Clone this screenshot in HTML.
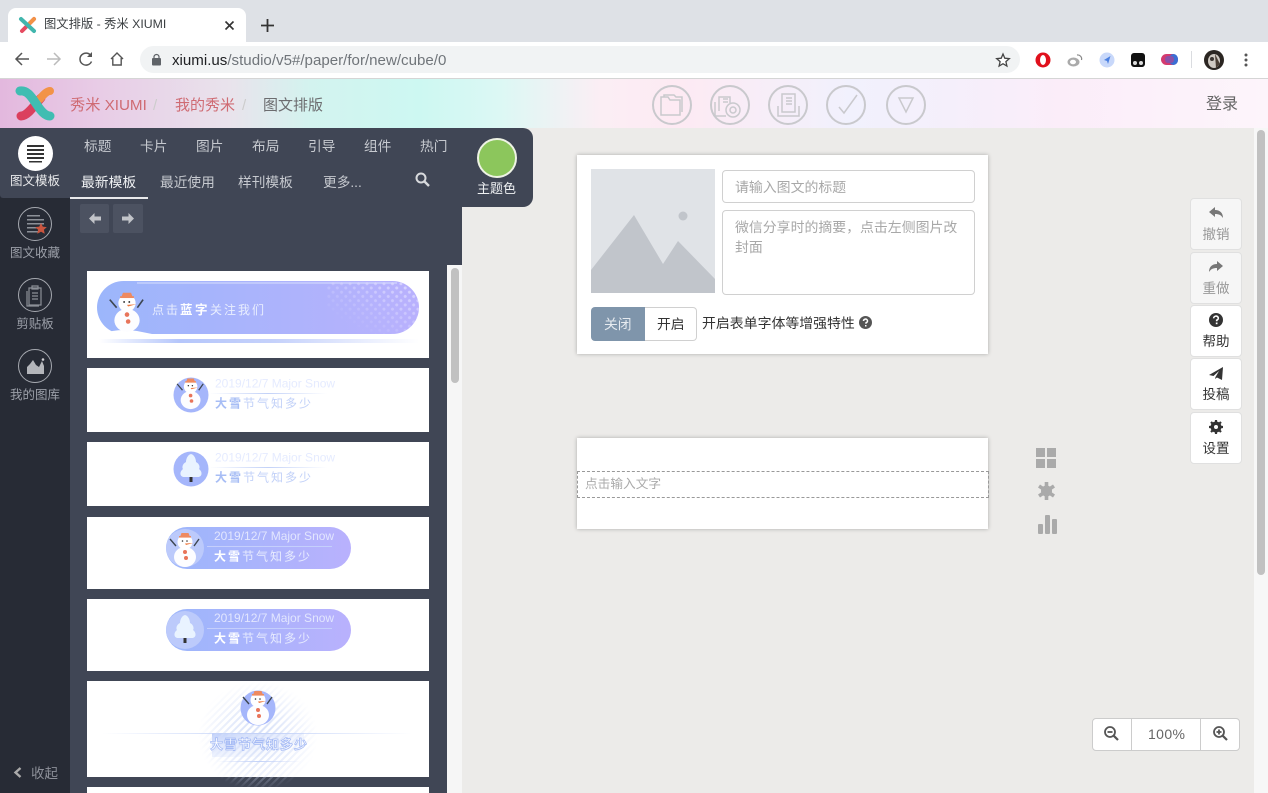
<!DOCTYPE html>
<html lang="zh"><head><meta charset="utf-8"><title>图文排版 - 秀米 XIUMI</title>
<style>
html,body{margin:0;padding:0;width:1268px;height:793px;overflow:hidden;background:#ecebe9}
body{position:relative;font-family:"Liberation Sans","Noto Sans CJK SC",sans-serif;font-size:14px;color:#333}
.a,.t{position:absolute}
.t{white-space:nowrap;line-height:1}
svg{position:absolute;overflow:visible}
.nav{color:#c6c9cf;font-size:13.700px}
.side{color:#9b9fa8;font-size:12.500px;width:70px;left:0;text-align:center}
.ring{position:absolute;left:18px;width:32px;height:32px;border:1.500px solid #a6a9b0;border-radius:50%}
.card{position:absolute;left:87px;width:342px;background:#fff}
.sb{position:absolute;left:1190px;width:52px;height:52px;background:#fff;border:1px solid #e0e0e0;box-sizing:border-box;border-radius:4px;text-align:center;font-size:13.500px;color:#333}
.sb span{position:absolute;left:0;right:0;top:29px;line-height:1}
.sb.off{background:#f6f6f6;color:#999}
.sb svg{left:18px;top:7px}
.hc{position:absolute;top:85px;width:36px;height:36px;border:2px solid #c9c9cd;border-radius:50%;box-sizing:content-box}
</style></head><body>
<svg width="0" height="0" style="position:absolute"><defs>
<g id="snow">
<path d="M-9-2-15-9M9-2 14-9" stroke="#3d4650" stroke-width="1.400"/>
<ellipse cx="0" cy="9" rx="11" ry="10" fill="#fdfdff"/>
<circle cx="0" cy="-6" r="7.500" fill="#fff"/>
<path d="M-5-11h10l-1.500-4h-7z" fill="#ee8a60"/><rect x="-6" y="-12" width="12" height="1.600" fill="#ee8a60"/>
<circle cx="-2.500" cy="-7" r=".8" fill="#333"/><circle cx="2" cy="-7" r=".8" fill="#333"/>
<path d="M0-4.500 8-5 1-3z" fill="#ee7a40"/>
<circle cx="0" cy="4" r="2" fill="#e8745a"/><circle cx="1" cy="10" r="2" fill="#e8745a"/>
</g>
<g id="tree">
<path d="M0-15C4-14 5-9 5-7 9-5 9-1 8 0 12 3 11 8 7 8H-7C-11 8-12 3-8 0-9-1-9-5-5-7-5-9-4-14 0-15Z" fill="#e9f3ff"/>
<rect x="-1.500" y="8" width="3" height="5" fill="#333"/>
</g>
<linearGradient id="bl" x1="0" x2="1" y1="0" y2="0"><stop offset="0" stop-color="#9cb6fb"/><stop offset="1" stop-color="#b9b1fd"/></linearGradient>
<linearGradient id="ln" x1="0" x2="1" y1="0" y2="0"><stop offset="0" stop-color="#c3d2f8" stop-opacity="0"/><stop offset=".5" stop-color="#c3d2f8"/><stop offset="1" stop-color="#c3d2f8" stop-opacity="0"/></linearGradient>
<linearGradient id="strip" x1="0" x2="1" y1="0" y2="0"><stop offset="0" stop-color="#fff"/><stop offset=".25" stop-color="#b5c6fb"/><stop offset=".55" stop-color="#c5d1fb"/><stop offset="1" stop-color="#fff"/></linearGradient>
<linearGradient id="bandg" x1="0" x2="1" y1="0" y2="1"><stop offset="0" stop-color="#bccdfa"/><stop offset="1" stop-color="#fff" stop-opacity="0"/></linearGradient>
<pattern id="hatch" width="5" height="5" patternUnits="userSpaceOnUse" patternTransform="rotate(45)"><rect width="2" height="5" fill="#d5dff8"/></pattern>
<pattern id="dots" width="6" height="6" patternUnits="userSpaceOnUse" patternTransform="rotate(45)"><circle cx="3" cy="3" r="1.500" fill="#dcd9ff"/></pattern>
<radialGradient id="fade"><stop offset="0" stop-color="#fff"/><stop offset=".5" stop-color="#999"/><stop offset="1" stop-color="#000"/></radialGradient>
<linearGradient id="dfade" x1="0" x2="1" y1="1" y2="0"><stop offset=".2" stop-color="#000"/><stop offset="1" stop-color="#fff"/></linearGradient>
<mask id="hm" maskUnits="userSpaceOnUse" x="-60" y="-45" width="120" height="110"><rect x="-60" y="-45" width="120" height="110" fill="url(#fade)"/></mask>
<mask id="dm" maskUnits="userSpaceOnUse" x="240" y="10" width="92" height="53"><rect x="240" y="10" width="92" height="53" fill="url(#dfade)"/></mask>
<clipPath id="pill1"><rect x="10" y="10" width="322" height="53" rx="26.500"/></clipPath>
</defs></svg>

<!-- browser chrome -->
<div class="a" style="left:0;top:0;width:1268px;height:42px;background:#dee1e6"></div>
<div class="a" style="left:8px;top:8px;width:238px;height:34px;background:#fff;border-radius:8px 8px 0 0"></div>
<svg style="left:19px;top:17px" width="18" height="16" viewBox="0 0 18 16"><path d="M15 2 3 14" stroke="#e64b60" stroke-width="4" stroke-linecap="round"/><path d="M15 2 11 6" stroke="#f29347" stroke-width="4" stroke-linecap="round"/><path d="M2 2 15 14" stroke="#41b6ad" stroke-width="4" stroke-linecap="round"/></svg>
<div class="t" style="left:44px;top:18px;font-size:12.300px;color:#3c4043;">图文排版 - 秀米 XIUMI</div>
<svg style="left:224px;top:20px" width="11" height="11"><path d="M1.500 1.500 9.500 9.500M9.500 1.500 1.500 9.500" stroke="#333" stroke-width="1.600"/></svg>
<svg style="left:261px;top:19px" width="13" height="13"><path d="M6.500 0V13M0 6.500H13" stroke="#333" stroke-width="1.800"/></svg>
<div class="a" style="left:0;top:42px;width:1268px;height:36px;background:#fff"></div>
<svg style="left:15px;top:52px" width="14" height="14" fill="none" stroke="#555" stroke-width="1.500"><path d="M14 7H1.500M7 1 1 7l6 6"/></svg>
<svg style="left:47px;top:52px" width="14" height="14" fill="none" stroke="#bbb" stroke-width="1.500"><path d="M0 7H12.500M7 1l6 6-6 6"/></svg>
<svg style="left:79px;top:52px" width="14" height="14" fill="none" stroke="#555" stroke-width="1.500"><path d="M12.500 9.500A6 6 0 1 1 12 3.800"/><path d="M13 0V5H8" fill="#555" stroke="none"/></svg>
<svg style="left:110px;top:52px" width="14" height="14" fill="none" stroke="#555" stroke-width="1.400"><path d="M1 7 7 1l6 6M2.800 6V13H11.200V6"/></svg>
<div class="a" style="left:140px;top:46px;width:880px;height:27px;background:#f1f3f4;border-radius:14px"></div>
<svg style="left:152px;top:54px" width="9" height="12"><rect y="4" width="9" height="7.500" rx="1" fill="#5f6368"/><path d="M2 4.500V3a2.500 2.500 0 0 1 5 0V4.500" fill="none" stroke="#5f6368" stroke-width="1.200"/></svg>
<div class="t" style="left:172px;top:53px;font-size:15.100px;color:#202124;">xiumi.us<span style="color:#70757a">/studio/v5#/paper/for/new/cube/0</span></div>
<svg style="left:996px;top:53px" width="14" height="14" fill="#fff" stroke="#444" stroke-width="1.300"><path d="M7 1 8.800 5.200 13.300 5.600 9.900 8.600 10.900 13 7 10.700 3.100 13 4.100 8.600.7 5.600 5.200 5.200Z"/></svg>
<svg style="left:1035px;top:52px" width="16" height="16"><circle cx="8" cy="8" r="7.500" fill="#e0101c"/><ellipse cx="8" cy="8" rx="3" ry="5" fill="#fff"/></svg>
<svg style="left:1067px;top:53px" width="16" height="14"><ellipse cx="6.500" cy="9" rx="6" ry="4.500" fill="#aaa"/><ellipse cx="6" cy="9" rx="3" ry="2.300" fill="#fff"/><path d="M10 2A4 4 0 0 1 14.500 7" fill="none" stroke="#888" stroke-width="1.200"/></svg>
<svg style="left:1099px;top:52px" width="16" height="16"><circle cx="8" cy="8" r="7.500" fill="#c8d8fa"/><path d="M11.500 4 5 8l3 1 1 3z" fill="#4a7fe0"/></svg>
<svg style="left:1130px;top:52px" width="16" height="16"><rect x="1" y="1" width="14" height="14" rx="3" fill="#111"/><circle cx="5" cy="11" r="2" fill="#ddd"/><circle cx="11" cy="11" r="2" fill="#ddd"/></svg>
<svg style="left:1161px;top:54px" width="17" height="11"><rect width="17" height="11" rx="5.500" fill="#d43a6f"/><rect x="8" width="9" height="11" rx="5" fill="#3a6fd4"/><rect x="4" y="2" width="9" height="7" rx="3" fill="#8a50a8"/></svg>
<div class="a" style="left:1191px;top:51px;width:1px;height:17px;background:#dadce0"></div>
<svg style="left:1204px;top:50px" width="20" height="20"><circle cx="10" cy="10" r="10" fill="#2b2622"/><ellipse cx="10" cy="11" rx="6" ry="7" fill="#cfc9c2"/><circle cx="8" cy="9" r="2" fill="#3a3430"/><path d="M11 4 16 14 12 18Z" fill="#4a3e34"/></svg>
<svg style="left:1244px;top:53px" width="4" height="14" fill="#555"><circle cx="2" cy="2" r="1.500"/><circle cx="2" cy="7" r="1.500"/><circle cx="2" cy="12" r="1.500"/></svg>
<div class="a" style="left:0;top:78px;width:1268px;height:1px;background:#d5d5d5"></div>

<!-- app header -->
<div class="a" style="left:0;top:79px;width:1268px;height:49px;background:linear-gradient(90deg,#e3b8de 0,#e8cce6 100px,#e9e3ec 230px,#d3f3ef 310px,#cdf8f2 420px,#dcf8f4 500px,#fbeef4 600px,#fdeaf3 680px,#f1f1fd 850px,#f5effb 950px,#fbedf9 1060px,#fdf5fb 1268px)"></div>
<svg style="left:14px;top:85px" width="42" height="38" viewBox="0 0 42 38"><path d="M7 31C14 31 22 18 27 13" fill="none" stroke="#db3f5e" stroke-width="9" stroke-linecap="round"/><path d="M26 14C29 10 33 6 36 6" fill="none" stroke="#f29347" stroke-width="8" stroke-linecap="round"/><path d="M6 6C14 5 18 13 23 20 27 26 31 31 36 31" fill="none" stroke="#40bdb2" stroke-width="9" stroke-linecap="round"/></svg>
<div class="t" style="left:70px;top:98px;font-size:15.200px;color:#cf6b73;">秀米 XIUMI</div>
<div class="t" style="left:153px;top:98px;font-size:15px;color:#ccc;">/</div>
<div class="t" style="left:175px;top:98px;font-size:15px;color:#cf6b73;">我的秀米</div>
<div class="t" style="left:242px;top:98px;font-size:15px;color:#ccc;">/</div>
<div class="t" style="left:263px;top:98px;font-size:15px;color:#6c6c6f;">图文排版</div>
<div class="hc" style="left:652px"></div>
<div class="hc" style="left:710px"></div>
<div class="hc" style="left:768px"></div>
<div class="hc" style="left:826px"></div>
<div class="hc" style="left:886px"></div>
<svg style="left:652px;top:85px" width="280" height="40" fill="none" stroke="#c9c9cd" stroke-width="1.500">
<path d="M9 15V30H28V15H18L16 12H9ZM12 12V10H22L24 12H30V27"/>
<path d="M67 26V12H78V18M63 17V31H74M71 14H76M71 17H76"/><circle cx="81" cy="25" r="7"/><circle cx="81" cy="25" r="3"/>
<path d="M130 15V27H143V9H130V15M134 13H140M134 16H140M134 19H140M126 21V31H147V21"/>
<path d="M187 22 192 28 205 10"/>
<path d="M247 13H261L254 27Z"/>
</svg>
<div class="t" style="left:1206px;top:97px;font-size:16px;color:#666;">登录</div>

<!-- left sidebar -->
<div class="a" style="left:0;top:128px;width:70px;height:665px;background:#272b35"></div>
<div class="a" style="left:70px;top:128px;width:392px;height:665px;background:#404655"></div>
<div class="a" style="left:70px;top:128px;width:463px;height:79px;background:#404655;border-radius:0 10px 10px 0"></div>
<div class="a" style="left:0;top:128px;width:70px;height:70px;background:#404655;border-radius:0 0 0 3px"></div>
<div class="a" style="left:18px;top:136px;width:35px;height:35px;background:#fff;border-radius:50%"></div>
<svg style="left:27px;top:145px" width="18" height="18" fill="#333"><rect width="17" height="2" y="0"/><rect width="17" height="2" y="4"/><rect width="17" height="2" y="8"/><rect width="17" height="2" y="12"/><rect x="2" width="13" height="1.500" y="16"/></svg>
<div class="t side" style="top:175px;color:#e8e9eb;">图文模板</div>

<div class="ring" style="top:207px"></div>
<svg style="left:27px;top:215px" width="28" height="24"><g fill="#8c9098"><rect width="13" height="1.500" y="0"/><rect width="17" height="1.500" y="4"/><rect width="17" height="1.500" y="8"/><rect width="17" height="1.500" y="12"/><rect width="13" height="1.500" y="16"/></g><path d="M14 8l1.800 3.600 4 .5-2.900 2.700.8 4-3.700-2-3.700 2 .8-4-2.900-2.700 4-.5z" fill="#c9553f"/></svg>
<div class="t side" style="top:247px;">图文收藏</div>
<div class="ring" style="top:278px"></div>
<svg style="left:26px;top:285px" width="19" height="22" fill="none" stroke="#8c9098" stroke-width="1.200"><path d="M3 3H15V20H3ZM1 6V21H13M6 1H12V4H6ZM6 8H12M6 11H12M6 14H12"/></svg>
<div class="t side" style="top:318px;">剪贴板</div>
<div class="ring" style="top:349px"></div>
<svg style="left:26px;top:358px" width="20" height="18" fill="#b4b6bb"><path d="M1 16V9L4 6 7 2 10 7 13 9 16 3 18 8V16Z"/><circle cx="17" cy="1.500" r="1.300" fill="#d0d0d4"/></svg>
<div class="t side" style="top:389px;">我的图库</div>
<svg style="left:13px;top:767px" width="10" height="11"><path d="M7.500 1 2.500 5.500 7.500 10" fill="none" stroke="#aaa" stroke-width="2.400"/></svg>
<div class="t" style="left:31px;top:767px;font-size:13.500px;color:#8d9099;">收起</div>

<!-- category nav -->
<div class="t nav" style="left:84px;top:140px;">标题</div>
<div class="t nav" style="left:140px;top:140px;">卡片</div>
<div class="t nav" style="left:196px;top:140px;">图片</div>
<div class="t nav" style="left:252px;top:140px;">布局</div>
<div class="t nav" style="left:308px;top:140px;">引导</div>
<div class="t nav" style="left:364px;top:140px;">组件</div>
<div class="t nav" style="left:420px;top:140px;">热门</div>
<div class="t" style="left:81px;top:176px;font-size:13.800px;color:#eef0f2;">最新模板</div>
<div class="t nav" style="left:160px;top:176px;">最近使用</div>
<div class="t nav" style="left:238px;top:176px;">样刊模板</div>
<div class="t nav" style="left:323px;top:176px;">更多...</div>
<div class="a" style="left:70px;top:197px;width:78px;height:2px;background:#e8e9eb"></div>
<svg style="left:415px;top:172px" width="15" height="15" fill="none" stroke="#d8dadd" stroke-width="2"><circle cx="6" cy="6" r="4.500"/><path d="M9.500 9.500 14 14" stroke-width="2.400"/></svg>
<div class="a" style="left:477px;top:138px;width:36px;height:36px;background:#8cc65c;border:2px solid #eef3e4;border-radius:50%;box-sizing:content-box"></div>
<div class="t" style="left:477px;top:182px;font-size:13px;color:#eef0f2;">主题色</div>
<div class="a" style="left:80px;top:204px;width:29px;height:29px;background:#4c5261;border-radius:2px"></div>
<div class="a" style="left:113px;top:204px;width:30px;height:29px;background:#4c5261;border-radius:2px"></div>
<svg style="left:89px;top:213px" width="12" height="11" fill="#c2c4c9"><path d="M0 5.500 5.500 0V3.500H12V7.500H5.500V11Z"/></svg>
<svg style="left:122px;top:213px" width="12" height="11" fill="#c2c4c9"><path d="M12 5.500 6.500 0V3.500H0V7.500H6.500V11Z"/></svg>

<!-- panel scrollbar -->
<div class="a" style="left:447px;top:265px;width:15px;height:528px;background:#f6f6f6"></div>
<div class="a" style="left:451px;top:268px;width:8px;height:115px;background:#c1c1c1;border-radius:4px"></div>

<!-- cards -->
<div class="card" style="top:271px;height:87px"></div>
<svg style="left:87px;top:271px" width="342" height="87">
<rect x="10" y="10" width="322" height="53" rx="26.500" fill="url(#bl)"/>
<rect x="50" y="11.500" width="260" height="1" fill="#d7defd"/>
<g clip-path="url(#pill1)"><rect x="240" y="10" width="92" height="53" fill="url(#dots)" mask="url(#dm)"/></g>
<path d="M15 63Q30 57 50 60L65 63Z" fill="#fff"/>
<rect x="12" y="68" width="320" height="4" fill="url(#strip)"/>
<g transform="translate(40 39) scale(1.150)"><use href="#snow"/></g>
<text x="65" y="43" font-size="12" letter-spacing="2" fill="#e9eefe">点击<tspan font-weight="700" fill="#fff" font-size="12.500" letter-spacing="2.500">蓝字</tspan>关注我们</text>
</svg>

<div class="card" style="top:368px;height:64px"></div>
<svg style="left:87px;top:368px" width="342" height="64">
<circle cx="104" cy="27" r="17.500" fill="#a5b6fb"/><use href="#snow" x="104" y="24" transform="translate(10 2.400) scale(.9)" />
<text x="128" y="19.500" font-size="12" fill="#e5ebff">2019/12/7 Major Snow</text>
<rect x="122" y="25" width="118" height="1" fill="url(#ln)"/>
<text x="128" y="39.500" font-size="12" letter-spacing="2" fill="#c2d1f8"><tspan font-weight="700" fill="#a7bdf5">大雪</tspan>节气知多少</text>
</svg>

<div class="card" style="top:442px;height:64px"></div>
<svg style="left:87px;top:442px" width="342" height="64">
<circle cx="104" cy="27" r="17.500" fill="#a5b6fb"/><use href="#tree" x="104" y="27"/>
<text x="128" y="19.500" font-size="12" fill="#e5ebff">2019/12/7 Major Snow</text>
<rect x="122" y="25" width="118" height="1" fill="url(#ln)"/>
<text x="128" y="39.500" font-size="12" letter-spacing="2" fill="#c2d1f8"><tspan font-weight="700" fill="#a7bdf5">大雪</tspan>节气知多少</text>
</svg>

<div class="card" style="top:517px;height:72px"></div>
<svg style="left:87px;top:517px" width="342" height="72">
<rect x="79" y="10" width="185" height="42" rx="21" fill="url(#bl)"/>
<circle cx="98" cy="31" r="19" fill="#bccafb"/><use href="#snow" x="98" y="31"/>
<text x="127" y="23" font-size="12" fill="#e2e6fe">2019/12/7 Major Snow</text>
<rect x="120" y="29" width="125" height="1" fill="#c5cffc"/>
<text x="127" y="43.500" font-size="12" letter-spacing="2" fill="#e7ebfe"><tspan font-weight="700" fill="#fff">大雪</tspan>节气知多少</text>
</svg>

<div class="card" style="top:599px;height:72px"></div>
<svg style="left:87px;top:599px" width="342" height="72">
<rect x="79" y="10" width="185" height="42" rx="21" fill="url(#bl)"/>
<circle cx="98" cy="31" r="19" fill="#bccafb"/><use href="#tree" x="98" y="31"/>
<text x="127" y="23" font-size="12" fill="#e2e6fe">2019/12/7 Major Snow</text>
<rect x="120" y="29" width="125" height="1" fill="#c5cffc"/>
<text x="127" y="43.500" font-size="12" letter-spacing="2" fill="#e7ebfe"><tspan font-weight="700" fill="#fff">大雪</tspan>节气知多少</text>
</svg>

<div class="card" style="top:681px;height:96px"></div>
<svg style="left:87px;top:681px" width="342" height="96">
<rect x="125" y="52" width="92" height="24" fill="url(#bandg)"/>
<g transform="translate(171 45)"><rect x="-60" y="-45" width="120" height="110" fill="url(#hatch)" mask="url(#hm)"/></g>
<circle cx="171" cy="27" r="17.500" fill="#a5b6fb"/><use href="#snow" x="171" y="25"/>
<rect x="15" y="52" width="310" height="1" fill="url(#ln)"/>
<rect x="130" y="80" width="84" height="1" fill="url(#ln)"/>
<text x="123" y="68" font-size="13" font-weight="700" letter-spacing="1" fill="#fff" stroke="#a6bbf5" stroke-width=".8">大雪节气知多少</text>
</svg>

<div class="card" style="top:787px;height:6px"></div>

<!-- editor cards -->
<div class="a" style="left:577px;top:155px;width:411px;height:199px;background:#fff;box-shadow:0 0 4px rgba(0,0,0,.28)"></div>
<svg style="left:591px;top:169px" width="124" height="124"><rect width="124" height="124" fill="#e0e3e7"/><path d="M0 101 43 46 72 95 87 72 124 110V124H0Z" fill="#c1c5cb"/><circle cx="92" cy="47" r="4.500" fill="#c1c5cb"/></svg>
<div class="a" style="left:722px;top:170px;width:253px;height:33px;background:#fff;border:1px solid #d0d0d0;border-radius:4px;box-sizing:border-box"></div>
<div class="t" style="left:735px;top:181px;font-size:13.900px;color:#a8a8a8;">请输入图文的标题</div>
<div class="a" style="left:722px;top:210px;width:253px;height:85px;background:#fff;border:1px solid #d0d0d0;border-radius:4px;box-sizing:border-box"></div>
<div class="t" style="left:735px;top:221px;font-size:13.900px;color:#a8a8a8;">微信分享时的摘要，点击左侧图片改</div>
<div class="t" style="left:735px;top:241px;font-size:13.900px;color:#a8a8a8;">封面</div>
<div class="a" style="left:591px;top:307px;width:54px;height:34px;background:#7f95ab;border-radius:4px 0 0 4px"></div>
<div class="a" style="left:645px;top:307px;width:52px;height:34px;background:#fff;border:1px solid #d0d0d0;border-left:0;border-radius:0 4px 4px 0;box-sizing:border-box"></div>
<div class="t" style="left:604px;top:318px;font-size:13.800px;color:#e6ebf0;">关闭</div>
<div class="t" style="left:657px;top:318px;font-size:13.800px;color:#333;">开启</div>
<div class="t" style="left:702px;top:317px;font-size:13.900px;color:#333;">开启表单字体等增强特性</div>
<svg style="left:859px;top:316px" width="13" height="13"><circle cx="6.500" cy="6.500" r="6.500" fill="#555"/><path d="M4.500 5A2 1.900 0 1 1 7 6.800V7.800" fill="none" stroke="#fff" stroke-width="1.500"/><rect x="6" y="9" width="1.500" height="1.500" fill="#fff"/></svg>

<div class="a" style="left:577px;top:438px;width:411px;height:91px;background:#fff;box-shadow:0 0 4px rgba(0,0,0,.28)"></div>
<div class="a" style="left:577px;top:471px;width:412px;height:27px;border:1px dashed #999;box-sizing:border-box"></div>
<div class="t" style="left:585px;top:478px;font-size:12.700px;color:#aaa;">点击输入文字</div>

<!-- floating icons -->
<svg style="left:1036px;top:448px" width="24" height="90" fill="#aaa">
<rect width="9" height="9"/><rect x="11" width="9" height="9"/><rect y="11" width="9" height="9"/><rect x="11" y="11" width="9" height="9"/>
<circle cx="10.500" cy="43" r="5.500"/>
<path d="M10.500 34V52M3 38 18 48M18 38 3 48" stroke="#aaa" stroke-width="3.600"/>
<rect x="2" y="76" width="5" height="10" rx="1"/><rect x="9" y="67" width="5" height="19" rx="1"/><rect x="16" y="71" width="5" height="15" rx="1"/>
</svg>

<!-- side buttons -->
<div class="sb off" style="top:198px"><svg style="top:8px" width="14" height="11"><path d="M0 5 6 0V3C11 3 14 6 14 11 12 8 10 7 6 7V10Z" fill="#777"/></svg><span>撤销</span></div>
<div class="sb off" style="top:252px"><svg style="top:8px" width="14" height="11"><path d="M14 5 8 0V3C3 3 0 6 0 11 2 8 4 7 8 7V10Z" fill="#777"/></svg><span>重做</span></div>
<div class="sb" style="top:305px"><svg width="14" height="14"><circle cx="7" cy="7" r="7" fill="#333"/><path d="M4.700 5.300A2.300 2.100 0 1 1 7.700 7.200V8.300" fill="none" stroke="#fff" stroke-width="1.600"/><rect x="6.800" y="9.500" width="1.700" height="1.700" fill="#fff"/></svg><span>帮助</span></div>
<div class="sb" style="top:358px"><svg style="top:8px" width="14" height="13"><path d="M14 0 0 8 4.500 9 10 4 6.500 10 6 12 8 10.500 13 13Z" fill="#333"/></svg><span>投稿</span></div>
<div class="sb" style="top:412px"><svg width="14" height="14"><circle cx="7" cy="7" r="4" fill="none" stroke="#333" stroke-width="3"/><path d="M7 0V14M0 7H14M2 2 12 12M12 2 2 12" stroke="#333" stroke-width="2.200"/><circle cx="7" cy="7" r="2" fill="#fff"/></svg><span>设置</span></div>

<!-- zoom -->
<div class="a" style="left:1092px;top:718px;width:148px;height:33px;background:#fff;border:1px solid #ccc;border-radius:4px;box-sizing:border-box"></div>
<div class="a" style="left:1131px;top:718px;width:1px;height:33px;background:#ccc"></div>
<div class="a" style="left:1200px;top:718px;width:1px;height:33px;background:#ccc"></div>
<svg style="left:1104px;top:726px" width="15" height="15" fill="none" stroke="#555" stroke-width="1.800"><circle cx="6" cy="6" r="5"/><path d="M9.800 9.800 14 14" stroke-width="2.200"/><path d="M3.500 6H8.500"/></svg>
<svg style="left:1213px;top:726px" width="15" height="15" fill="none" stroke="#555" stroke-width="1.800"><circle cx="6" cy="6" r="5"/><path d="M9.800 9.800 14 14" stroke-width="2.200"/><path d="M3.500 6H8.500M6 3.500V8.500"/></svg>
<div class="t" style="left:1148px;top:727px;font-size:14px;letter-spacing:.4px;color:#666;">100%</div>

<!-- page scrollbar -->
<div class="a" style="left:1254px;top:128px;width:14px;height:665px;background:#f7f7f7"></div>
<div class="a" style="left:1257px;top:130px;width:8px;height:445px;background:#c1c1c1;border-radius:4px"></div>
</body></html>
